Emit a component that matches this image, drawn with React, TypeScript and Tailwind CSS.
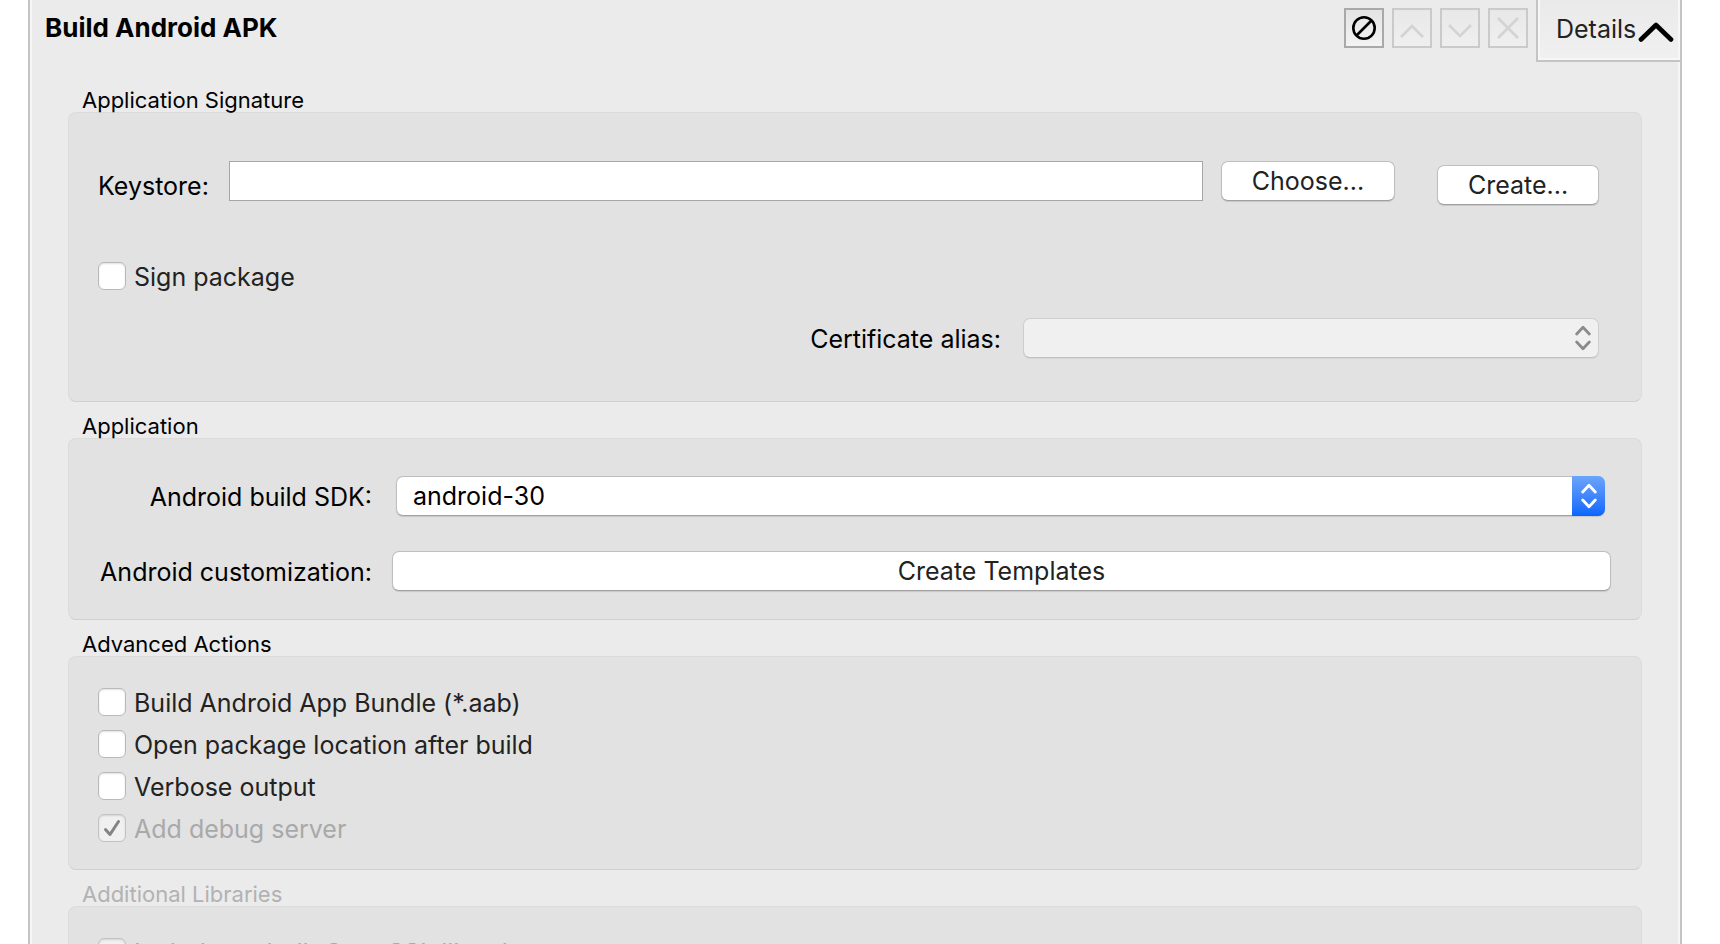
import type { ReactNode } from "react";

const FIELD =
  "border border-t-[#bebebe] border-x-[#bebebe] border-b-[#a0a0a0] rounded-[7px] bg-white shadow-[0_1px_1px_rgba(0,0,0,0.12)]";

type GroupProps = {
  title: string;
  disabled?: boolean;
  className: string;
  children: ReactNode;
};

const Group = ({ title, disabled, className, children }: GroupProps) => (
  <section>
    <h2
      className={`h-9 pl-3.5 pt-3 text-[22px] leading-6 ${disabled ? "text-[#b2b2b2]" : "text-black"}`}
    >
      {title}
    </h2>
    <div
      className={`border border-[#dbdbdb] border-b-[#cfcfcf] rounded-lg bg-[#e2e2e2] pl-[29px] ${className}`}
    >
      {children}
    </div>
  </section>
);

type CheckProps = {
  label: string;
  checked?: boolean;
  disabled?: boolean;
};

const Check = ({ label, checked, disabled }: CheckProps) => (
  <label
    className={`flex h-7 items-center gap-2 ${disabled ? "text-[#a9a9a9]" : "text-[#222]"}`}
  >
    <span className="relative size-7">
      <input
        type="checkbox"
        defaultChecked={checked}
        disabled={disabled}
        className="peer block size-7 appearance-none rounded-md border border-[#b9b9b9] bg-white shadow-[inset_0_1px_2px_rgba(0,0,0,0.12)] disabled:border-[#c2c2c2] disabled:bg-[#f0f0f0]"
      />
      <svg
        viewBox="0 0 28 28"
        className="pointer-events-none absolute inset-0 hidden size-7 peer-checked:block"
        fill="none"
        stroke="#838383"
        strokeWidth="3"
        strokeLinecap="round"
        strokeLinejoin="round"
      >
        <path d="M7.5 15.5 12 20.5 20.5 7.5" />
      </svg>
    </span>
    <span className="pt-0.5">{label}</span>
  </label>
);

const UpDown = () => (
  <svg
    viewBox="0 0 16 26"
    className="h-[26px] w-4"
    fill="none"
    stroke="currentColor"
    strokeWidth="2.8"
    strokeLinecap="round"
    strokeLinejoin="round"
  >
    <path d="M1.7 9 8 2.3 14.3 9M1.7 17 8 23.7 14.3 17" />
  </svg>
);

type ToolProps = {
  label: string;
  disabled?: boolean;
  children: ReactNode;
};

const ToolButton = ({ label, disabled, children }: ToolProps) => (
  <button
    aria-label={label}
    disabled={disabled}
    className="size-10 border-2 border-[#a9a9a9] bg-linear-to-b from-[#e4e4e4] to-[#f3f3f3] text-black disabled:border-[#cacaca] disabled:from-[#e8e8e8] disabled:to-[#efefef] disabled:text-[#d3d3d3]"
  >
    <svg viewBox="0 0 36 36" className="size-9" fill="none" stroke="currentColor">
      {children}
    </svg>
  </button>
);

const Header = () => (
  <header className="flex h-[62px] items-start">
    <h1 className="grow pl-[13px] pt-2 text-[26px] leading-10 font-bold text-black">
      Build Android APK
    </h1>
    <div className="flex gap-2 pt-2 pr-2">
      <ToolButton label="Disable">
        <circle cx="18" cy="18" r="10.7" strokeWidth="2.6" />
        <path d="M10.5 25.5 25.5 10.5" strokeWidth="2.6" />
      </ToolButton>
      <ToolButton label="Move up" disabled>
        <path d="M7 27 18 16 29 27" strokeWidth="2.6" />
      </ToolButton>
      <ToolButton label="Move down" disabled>
        <path d="M7 15 18 26 29 15" strokeWidth="2.6" />
      </ToolButton>
      <ToolButton label="Remove" disabled>
        <path d="M8 8 28 28M28 8 8 28" strokeWidth="2.6" />
      </ToolButton>
    </div>
    <button className="-mr-0.5 flex h-[62px] w-[144px] items-center border-b-2 border-l-2 border-[#c4c4c4] bg-linear-to-b from-[#eaeaea] to-[#f0f0f0] pb-0.5 pl-[18px] text-[#222] shadow-[inset_2px_-2px_0_#f7f7f7,inset_-2px_0_0_#f7f7f7]">
      Details
      <svg
        viewBox="0 0 36 22"
        className="ml-0.5 mt-1.5 h-[22px] w-9"
        fill="none"
        stroke="#000"
        strokeWidth="4.6"
        strokeLinecap="round"
        strokeLinejoin="round"
      >
        <path d="M3 18.5 18 4 33 18.5" />
      </svg>
    </button>
  </header>
);

const App = () => (
  <div className="h-screen overflow-hidden bg-white pl-7 pr-[38px] font-['Inter','Liberation_Sans',sans-serif] text-[25px] leading-10">
    <main className="min-h-full border-x-2 border-[#c4c4c4] bg-[#ebebeb]">
      <div className="min-h-screen border-x-2 border-[#f6f6f6]">
        <Header />
        <div className="pt-3.5 pl-9 pr-9">
          <Group title="Application Signature" className="pt-12 pb-[43px] pr-[42px]">
            <div className="flex h-11 items-end">
              <label htmlFor="keystore" className="h-10 w-[131px] leading-[42px] text-black">
                Keystore:
              </label>
              <div className="flex grow gap-[18px] self-start">
                <input
                  id="keystore"
                  type="text"
                  className="h-10 min-w-0 grow border border-[#a6a6a6] bg-white px-2"
                />
                <button className={`h-10 w-[174px] leading-9 text-[#222] ${FIELD}`}>
                  Choose...
                </button>
              </div>
              <button className={`ml-[42px] h-10 w-[162px] leading-9 text-[#222] ${FIELD}`}>
                Create...
              </button>
            </div>
            <div className="pt-[57px]">
              <Check label="Sign package" />
            </div>
            <div className="flex justify-end gap-[22px] pt-7">
              <label htmlFor="alias" className="h-10 leading-[42px] text-black">
                Certificate alias:
              </label>
              <div className="relative w-[576px]">
                <select
                  id="alias"
                  disabled
                  className="block h-10 w-full appearance-none rounded-[7px] border border-[#cecece] border-b-[#c0c0c0] bg-[#f0f0f0] px-4 opacity-100 shadow-[0_1px_1px_rgba(0,0,0,0.06)]"
                />
                <span className="pointer-events-none absolute inset-y-0 right-2 flex items-center text-[#8b8b8b]">
                  <UpDown />
                </span>
              </div>
            </div>
          </Group>

          <Group title="Application" className="pt-[37px] pb-7 pr-[30px]">
            <div className="grid grid-cols-[274px_1fr] gap-x-5 gap-y-[35px]">
              <label htmlFor="sdk" className="h-10 text-right leading-[42px] text-black">
                Android build SDK:
              </label>
              <div className="relative ml-1 mr-1.5">
                <select
                  id="sdk"
                  className={`block h-10 w-full appearance-none px-4 leading-9 text-black ${FIELD}`}
                >
                  <option>android-30</option>
                </select>
                <span className="pointer-events-none absolute inset-y-0 right-0 flex w-[33px] items-center justify-center rounded-r-[7px] bg-linear-to-b from-[#6ba4fb] to-[#0565fe] text-white">
                  <UpDown />
                </span>
              </div>
              <label htmlFor="templates" className="h-10 text-right leading-[42px] text-black">
                Android customization:
              </label>
              <button id="templates" className={`h-10 leading-9 text-[#222] ${FIELD}`}>
                Create Templates
              </button>
            </div>
          </Group>

          <Group title="Advanced Actions" className="pt-[31px] pb-[27px]">
            <div className="flex flex-col gap-3.5">
              <Check label="Build Android App Bundle (*.aab)" />
              <Check label="Open package location after build" />
              <Check label="Verbose output" />
              <Check label="Add debug server" checked disabled />
            </div>
          </Group>

          <Group title="Additional Libraries" disabled className="pt-[31px] pb-[27px]">
            <Check label="Include prebuilt OpenSSL libraries" disabled />
          </Group>
        </div>
      </div>
    </main>
  </div>
);

export default App;
